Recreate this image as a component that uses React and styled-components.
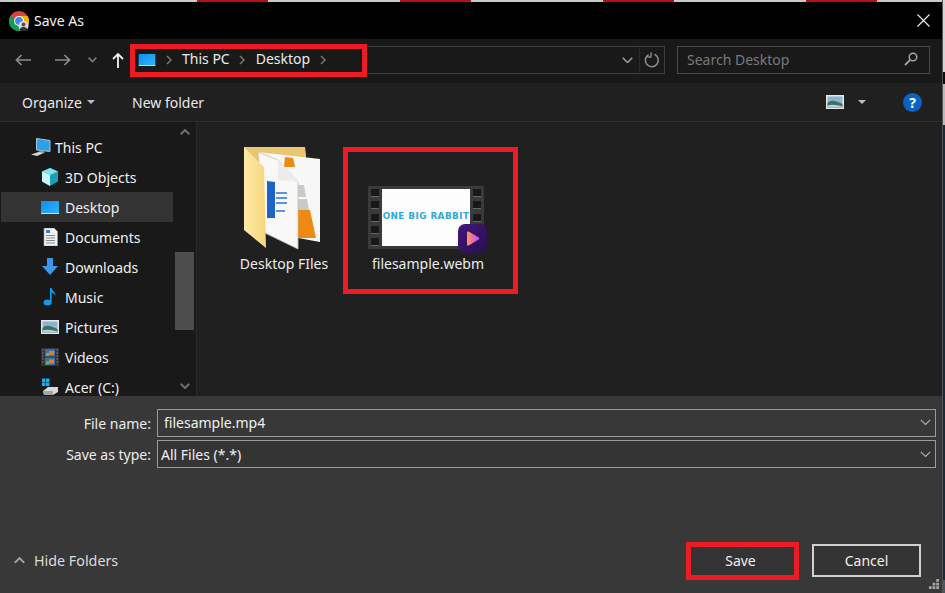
import React from "react";
import styled, { createGlobalStyle } from "styled-components";

const GlobalFix = createGlobalStyle`
  html, body { margin: 0; padding: 0; background: #000; }
  body { font-family: "Noto Sans", "Open Sans", sans-serif; font-size: 14px; color: #f2f2f2; }
`;

const Page = styled.div`
  position: relative;
  width: 945px;
  height: 593px;
  overflow: hidden;
  background: linear-gradient(to bottom, #d4d4d4 0 72px, #0c0c0c 72px 84px, #b9b9b9 84px 125px, #18293a 125px 580px, #4b5560 580px);
`;

const Dialog = styled.div`
  width: 943px;
  height: 593px;
  box-sizing: border-box;
  border-right: 1px solid #555;
  display: flex;
  flex-direction: column;
`;

const BackStrip = styled.div`
  height: 2px;
  flex: none;
  background: #c9c9c9;
  display: flex;
  gap: 132px;
  padding-left: 197px;
`;
const BackMark = styled.span`
  width: 71px;
  background: #b5120f;
`;

const TitleBar = styled.div`
  height: 37px;
  flex: none;
  background: #000;
  display: flex;
  align-items: center;
  padding: 0 12px 0 9px;
  gap: 5px;
`;
const TitleText = styled.div`
  flex: 1;
  font-size: 14px;
  color: #f4f4f4;
`;

const NavBar = styled.div`
  height: 44px;
  flex: none;
  background: #191919;
  box-sizing: border-box;
  display: flex;
  align-items: center;
  padding: 0 15px 2px;
`;
const NavButton = styled.div`
  width: ${(p) => p.$w}px;
  display: flex;
  align-items: center;
  flex: none;
`;
const AddressBar = styled.div`
  width: 532px;
  height: 28px;
  margin-left: 8px;
  box-sizing: border-box;
  border: 1px solid #3d3d3d;
  display: flex;
  align-items: center;
  padding-left: 4px;
  flex: none;
`;
const Crumb = styled.span`
  font-size: 14px;
  line-height: 18px;
  padding-bottom: 2px;
  color: #ececec;
`;
const CrumbArrow = styled.svg`
  width: 7px;
  height: 10px;
  margin: 0 9.5px;
  flex: none;
`;
const AddressEnd = styled.div`
  margin-left: auto;
  display: flex;
  align-items: center;
  height: 100%;
`;
const AddressCaret = styled.div`
  width: 24px;
  height: 100%;
  display: flex;
  align-items: center;
  justify-content: center;
  border-right: 1px solid #2a2a2a;
`;
const Refresh = styled.div`
  width: 24px;
  height: 100%;
  display: flex;
  align-items: center;
  justify-content: center;
`;
const SearchBox = styled.div`
  width: 253px;
  height: 28px;
  margin-left: 12px;
  box-sizing: border-box;
  border: 1px solid #4a4a4a;
  display: flex;
  align-items: center;
  justify-content: space-between;
  padding: 0 11px 2px 9px;
  flex: none;
  font-size: 14px;
  color: #7a7a7a;
`;

const ToolBar = styled.div`
  height: 38px;
  flex: none;
  background: #202020;
  border-bottom: 1px solid #2e2e2e;
  display: flex;
  align-items: center;
  padding: 0 20px 0 22px;
  font-size: 14px;
  color: #e8e8e8;
`;
const Organize = styled.div`
  display: flex;
  align-items: center;
  gap: 5px;
  width: 110px;
`;
const SmallCaret = styled.span`
  width: 0;
  height: 0;
  border-left: 4px solid transparent;
  border-right: 4px solid transparent;
  border-top: 4px solid #bdbdbd;
  flex: none;
`;
const ToolRight = styled.div`
  margin-left: auto;
  display: flex;
  align-items: center;
  gap: 14px;
`;
const ViewCaret = styled(SmallCaret)`
  margin-right: 23px;
`;
const HelpBadge = styled.div`
  width: 19px;
  height: 19px;
  border-radius: 50%;
  background: #0a63c4;
  color: #fff;
  font-weight: 700;
  font-size: 14px;
  line-height: 19px;
  text-align: center;
`;

const Main = styled.div`
  height: 274px;
  flex: none;
  display: flex;
  overflow: hidden;
`;
const Sidebar = styled.div`
  width: 197px;
  flex: none;
  background: #191919;
  border-right: 1px solid #2b2b2b;
  box-sizing: border-box;
  display: flex;
`;
const Tree = styled.div`
  width: 175px;
  padding: 10px 0 0 1px;
  box-sizing: border-box;
  flex: none;
`;
const TreeRow = styled.div`
  height: 30px;
  width: 172px;
  display: flex;
  align-items: center;
  gap: 6px;
  box-sizing: border-box;
  padding-left: ${(p) => (p.$root ? 30 : 40)}px;
  background: ${(p) => (p.$active ? "#333" : "transparent")};
  font-size: 14px;
  color: #f0f0f0;
`;
const TreeIcon = styled.span`
  width: 18px;
  height: 18px;
  flex: none;
  display: flex;
  align-items: center;
  justify-content: center;
`;
const ScrollTrack = styled.div`
  width: 19px;
  display: flex;
  flex-direction: column;
  align-items: center;
  padding-top: 7px;
`;
const ScrollThumb = styled.div`
  width: 19px;
  height: 78px;
  background: #4d4d4d;
  margin-top: 117px;
`;
const ScrollDown = styled.div`
  margin-top: 53px;
  display: flex;
`;

const Files = styled.div`
  flex: 1;
  background: #202020;
  display: flex;
  gap: 40px;
  padding-left: 35px;
`;
const Tile = styled.div`
  width: 104px;
  height: 274px;
  box-sizing: border-box;
  padding-bottom: 122px;
  display: flex;
  flex-direction: column;
  align-items: center;
  justify-content: flex-end;
  font-size: 14px;
  color: #ececec;
`;
const TileLabel = styled.div`
  margin-top: 2px;
  white-space: nowrap;
  line-height: 20px;
`;
const VideoThumb = styled.div`
  width: 116px;
  height: 63px;
  margin: 0 4px 3px 0;
  background: #3a3a3a;
  display: flex;
  justify-content: space-between;
  position: relative;
  flex: none;
`;
const FilmEdge = styled.div`
  width: 14px;
  display: flex;
  flex-direction: column;
  justify-content: space-between;
  align-items: center;
  padding: 3px 0;
  box-sizing: border-box;
`;
const FilmHole = styled.span`
  width: 8px;
  height: 7px;
  background: #181818;
  border-bottom: 1px solid #666;
`;
const Frame = styled.div`
  width: 88px;
  margin: 3px 0;
  background: #fdfdfd;
  color: #2fa9d8;
  font-family: "DejaVu Sans", sans-serif;
  font-size: 8.8px;
  font-weight: 700;
  letter-spacing: 0.45px;
  white-space: nowrap;
  display: flex;
  align-items: center;
  justify-content: center;
  padding-bottom: 3px;
  box-sizing: border-box;
`;
const AppBadge = styled.div`
  position: absolute;
  left: 90px;
  top: 38px;
  width: 29px;
  height: 29px;
  border-radius: 7px;
  background: linear-gradient(135deg, #43177a, #26104c);
  display: flex;
  align-items: center;
  justify-content: center;
`;

const Bottom = styled.div`
  flex: 1;
  background: #383838;
  display: flex;
  flex-direction: column;
  padding: 13px 6px 0 0;
  position: relative;
`;
const Form = styled.div`
  display: grid;
  grid-template-columns: 157px 1fr;
  row-gap: 3px;
  align-items: center;
`;
const FieldLabel = styled.div`
  text-align: right;
  padding-right: 6px;
  font-size: 14px;
  color: #ececec;
`;
const Field = styled.div`
  height: 28px;
  box-sizing: border-box;
  border: 1px solid #9a9a9a;
  background: ${(p) => (p.$select ? "#343434" : "#383838")};
  display: flex;
  align-items: center;
  justify-content: space-between;
  padding: 0 4px ${(p) => (p.$select ? 0 : 1)}px ${(p) => (p.$select ? 3 : 6)}px;
  font-size: 14px;
  color: #f0f0f0;
`;
const Footer = styled.div`
  margin-top: auto;
  margin-right: 15px;
  padding-bottom: 16px;
  display: flex;
  align-items: center;
`;
const HideFolders = styled.div`
  display: flex;
  align-items: center;
  gap: 9px;
  padding-left: 14px;
  margin-right: auto;
  font-size: 14.3px;
  color: #dcdcdc;
`;
const DialogButton = styled.div`
  width: 109px;
  height: 33px;
  box-sizing: border-box;
  border: 2px solid ${(p) => (p.$plain ? "transparent" : "#d0d0d0")};
  background: #333;
  margin-left: 17px;
  display: flex;
  align-items: center;
  justify-content: center;
  font-size: 14px;
  color: #f0f0f0;
`;
const Grip = styled.svg`
  position: absolute;
  right: 3px;
  bottom: 3px;
  width: 11px;
  height: 11px;
`;

// the red boxes are drawn over the dialog, they mark steps in the tutorial
const Highlight = styled.div`
  position: absolute;
  left: ${(p) => p.$x}px;
  top: ${(p) => p.$y}px;
  width: ${(p) => p.$w}px;
  height: ${(p) => p.$h}px;
  box-sizing: border-box;
  border: 5px solid #ed1c24;
  pointer-events: none;
`;

const ChromeIcon = () => (
  <svg width="20" height="20" viewBox="0 0 20 20">
    <circle cx="10" cy="10" r="10" fill="#db4437" />
    <path d="M10 10 1.3 5 A10 10 0 0 0 10 20 Z" fill="#0f9d58" />
    <path d="M10 10 10 20 A10 10 0 0 0 18.7 5 L10 5 Z" fill="#f4b400" />
    <circle cx="10" cy="10" r="5" fill="#fff" />
    <circle cx="10" cy="10" r="3.9" fill="#4285f4" />
    <circle cx="14.5" cy="15" r="5" fill="#ddd" />
    <circle cx="14.5" cy="13.5" r="2" fill="#6b4a3a" />
    <path d="M10.5 20a4 4 0 0 1 8 0z" fill="#333" />
  </svg>
);

const CloseIcon = () => (
  <svg width="13" height="13" viewBox="0 0 13 13">
    <path d="M.5.5l12 12M12.5.5l-12 12" stroke="#f2f2f2" strokeWidth="1.1" />
  </svg>
);

const ArrowLeft = ({ color, flip }) => (
  <svg width="17" height="12" viewBox="0 0 17 12" style={flip ? { transform: "scaleX(-1)" } : undefined}>
    <path d="M6.5 1 1.5 6l5 5M1.5 6H16" fill="none" stroke={color} strokeWidth="1.7" />
  </svg>
);

const ArrowUp = () => (
  <svg width="12" height="15" viewBox="0 0 12 15">
    <path d="M1 6l5-5 5 5M6 1v14" fill="none" stroke="#f4f4f4" strokeWidth="1.8" />
  </svg>
);

const Chevron = ({ size = 9, color = "#8a8a8a", width = 1.5, up }) => (
  <svg width={size} height={size * 0.6} viewBox="0 0 10 6" style={up ? { transform: "scaleY(-1)" } : undefined}>
    <path d="M.7.7 5 5 9.3.7" fill="none" stroke={color} strokeWidth={width} />
  </svg>
);

const Sep = () => (
  <CrumbArrow viewBox="0 0 7 10">
    <path d="M1 1l4 4-4 4" fill="none" stroke="#7d7d7d" strokeWidth="1.4" />
  </CrumbArrow>
);

const DesktopIcon = ({ w = 18, h = 13 }) => (
  <svg width={w} height={h} viewBox="0 0 18 13">
    <defs>
      <linearGradient id="dsk" x1="0" y1="0" x2="1" y2="1">
        <stop offset="0" stopColor="#0a8ff0" />
        <stop offset="1" stopColor="#35b4fb" />
      </linearGradient>
    </defs>
    <rect width="18" height="13" fill="url(#dsk)" />
    <rect y="12" width="18" height="1" fill="#bfe3fb" />
  </svg>
);

const PcIcon = () => (
  <svg width="20" height="18" viewBox="0 0 20 18" style={{ flex: "none", marginLeft: 2 }}>
    <path d="M5.500.5 19 2.500v11L5.500 12z" fill="#2f9fe8" stroke="#9fc6de" strokeWidth="1" />
    <path d="M0 16.500 9 13.500l5 1-8 3.500z" fill="#d5d5d5" />
    <path d="M9 12.500l5 1-1 1.500-5-1z" fill="#8c8c8c" />
  </svg>
);

const CubeIcon = () => (
  <svg width="18" height="18" viewBox="0 0 18 18">
    <path d="M9 0l8 3.500v10L9 18l-8-4.500v-10z" fill="#1d9fb5" />
    <path d="M9 0l8 3.500L9 7 1 3.500z" fill="#7fe3ee" />
    <path d="M1 3.500 9 7v11l-8-4.500z" fill="#c9f4f6" />
  </svg>
);

const DocIcon = () => (
  <svg width="15" height="18" viewBox="0 0 15 18">
    <path d="M1 0h10l3.500 3.500V18H1z" fill="#f3f3f3" stroke="#9a9a9a" strokeWidth=".6" />
    <rect x="3" y="2" width="4" height="3" fill="#2f7fd0" />
    <path d="M3 7.500h9M3 10h9M3 12.500h9M3 15h9" stroke="#7d8a96" strokeWidth="1" />
  </svg>
);

const DownloadIcon = () => (
  <svg width="18" height="18" viewBox="0 0 18 18">
    <path d="M6 0h6v8h5l-8 9-8-9h5z" fill="#3d97e8" />
  </svg>
);

const MusicIcon = () => (
  <svg width="14" height="18" viewBox="0 0 14 18">
    <ellipse cx="4.500" cy="14.500" rx="4" ry="3" fill="#139be8" />
    <path d="M7 14V0h1.600c.4 3 4.400 4 3.800 8-.6-2-2.400-3-3.800-3.200V14z" fill="#139be8" />
  </svg>
);

const PictureIcon = ({ w = 18, h = 14 }) => (
  <svg width={w} height={h} viewBox="0 0 18 14">
    <rect width="18" height="14" fill="#e9e9e9" />
    <rect x="1.500" y="1.500" width="15" height="11" fill="#8ab6cf" />
    <path d="M1.500 8C5 4 10 6 16.500 9v3.500h-15z" fill="#3f6f6a" />
    <path d="M1.500 10.500C6 9 11 10 16.500 11.500v1h-15z" fill="#bcd0d0" />
  </svg>
);

const FilmIcon = () => (
  <svg width="18" height="18" viewBox="0 0 18 18">
    <rect width="18" height="18" fill="#333" />
    <path d="M1 2h1.500M1 5h1.500M1 8h1.500M1 11h1.500M1 14h1.500M15.500 2H17M15.500 5H17M15.500 8H17M15.500 11H17M15.500 14H17" stroke="#888" strokeWidth="1.200" />
    <rect x="4" y="1" width="10" height="7.500" fill="#3b6fb0" />
    <rect x="4" y="9.500" width="10" height="7.500" fill="#3b6fb0" />
    <rect x="8" y="3" width="5" height="4" fill="#d9822b" />
    <rect x="8" y="11.500" width="5" height="4" fill="#d9822b" />
    <rect x="5" y="5" width="3" height="3" fill="#6fb04a" />
    <rect x="5" y="13.500" width="3" height="3" fill="#6fb04a" />
  </svg>
);

const DriveIcon = () => (
  <svg width="18" height="18" viewBox="0 0 18 18">
    <path d="M1 .5h3.400v3.400H1zM5 .5h3.400v3.400H5zM1 4.500h3.400v3.400H1zM5 4.500h3.400v3.400H5z" fill="#12b3ee" />
    <path d="M2 13l5-4h10v5l-5 3H3z" fill="#d8d8d8" />
    <path d="M2 13h10v4H3z" fill="#a5a5a5" />
  </svg>
);

const RefreshIcon = () => (
  <svg width="16" height="16" viewBox="0 0 16 16">
    <path d="M10.500 2.300A6.500 6.500 0 1 1 4.600 2.600" fill="none" stroke="#8c8c8c" strokeWidth="1.600" />
    <path d="M7 0v5H2.200" fill="none" stroke="#8c8c8c" strokeWidth="1.400" transform="rotate(8 5 3)" />
  </svg>
);

const SearchIcon = () => (
  <svg width="14" height="14" viewBox="0 0 14 14">
    <circle cx="9" cy="5" r="3.800" fill="none" stroke="#a5a5a5" strokeWidth="1.500" />
    <path d="M6.200 7.800 1 13" stroke="#a5a5a5" strokeWidth="1.800" />
  </svg>
);

const FolderIcon = () => (
  <svg width="80" height="105" viewBox="0 0 80 105">
    <defs>
      <linearGradient id="fld" x1="0" y1="0" x2="1" y2="0">
        <stop offset="0" stopColor="#fdeaa6" />
        <stop offset="1" stopColor="#f7d67c" />
      </linearGradient>
    </defs>
    <path d="M0 0h61l1 8v30H0z" fill="#e9c670" />
    <path d="M14 5l62 7v83l-22-4z" fill="#f7f7f7" />
    <path d="M41 10l8 1 2 9-11 0z" fill="#ee8a12" />
    <path d="M54 38h6l2 12h-8zM54 52h9l2 11H54z" fill="#c9c9c9" />
    <path d="M54 63h12l6 28H54z" fill="#ee8a12" />
    <path d="M14 5l20 8 20 22v67L21 86z" fill="#f8f8f8" stroke="#c9c0a8" strokeWidth=".8" />
    <path d="M34 13v20l20 2z" fill="#ececec" />
    <path d="M23 34l8 1v36h-8z" fill="#1e63c5" />
    <path d="M32 46h11M32 51h11M32 56h11M32 64h9" stroke="#2b74c9" strokeWidth="1.500" />
    <path d="M0 0l20 20 2 81L0 83z" fill="url(#fld)" />
  </svg>
);

const treeItems = [
  { label: "3D Objects", icon: <CubeIcon /> },
  { label: "Desktop", icon: <DesktopIcon />, active: true },
  { label: "Documents", icon: <DocIcon /> },
  { label: "Downloads", icon: <DownloadIcon /> },
  { label: "Music", icon: <MusicIcon /> },
  { label: "Pictures", icon: <PictureIcon /> },
  { label: "Videos", icon: <FilmIcon /> },
  { label: "Acer (C:)", icon: <DriveIcon /> },
];

const filmHoles = [0, 1, 2, 3, 4];

export default function App() {
  return (
    <Page>
      <GlobalFix />
      <Dialog>
        <BackStrip>
          <BackMark />
          <BackMark />
          <BackMark />
          <BackMark />
        </BackStrip>

        <TitleBar>
          <ChromeIcon />
          <TitleText>Save As</TitleText>
          <CloseIcon />
        </TitleBar>

        <NavBar>
          <NavButton $w={39}><ArrowLeft color="#8c8c8c" /></NavButton>
          <NavButton $w={34}><ArrowLeft color="#8c8c8c" flip /></NavButton>
          <NavButton $w={24}><Chevron size={9} color="#7a7a7a" width={1.8} /></NavButton>
          <NavButton $w={13}><ArrowUp /></NavButton>
          <AddressBar>
            <DesktopIcon w={18} h={12} />
            <Sep />
            <Crumb>This PC</Crumb>
            <Sep />
            <Crumb>Desktop</Crumb>
            <Sep />
            <AddressEnd>
              <AddressCaret><Chevron size={11} color="#999" width={1.5} /></AddressCaret>
              <Refresh><RefreshIcon /></Refresh>
            </AddressEnd>
          </AddressBar>
          <SearchBox>
            <span>Search Desktop</span>
            <SearchIcon />
          </SearchBox>
        </NavBar>

        <ToolBar>
          <Organize>Organize <SmallCaret /></Organize>
          <span>New folder</span>
          <ToolRight>
            <PictureIcon w={18} h={14} />
            <ViewCaret />
            <HelpBadge>?</HelpBadge>
          </ToolRight>
        </ToolBar>

        <Main>
          <Sidebar>
            <Tree>
              <TreeRow $root>
                <TreeIcon><PcIcon /></TreeIcon>
                This PC
              </TreeRow>
              {treeItems.map((item) => (
                <TreeRow key={item.label} $active={item.active}>
                  <TreeIcon>{item.icon}</TreeIcon>
                  {item.label}
                </TreeRow>
              ))}
            </Tree>
            <ScrollTrack>
              <Chevron size={10} color="#6e6e6e" width={2} up />
              <ScrollThumb />
              <ScrollDown><Chevron size={10} color="#6e6e6e" width={2} /></ScrollDown>
            </ScrollTrack>
          </Sidebar>
          <Files>
            <Tile>
              <FolderIcon />
              <TileLabel>Desktop FIles</TileLabel>
            </Tile>
            <Tile>
              <VideoThumb>
                <FilmEdge>{filmHoles.map((h) => <FilmHole key={h} />)}</FilmEdge>
                <Frame>ONE BIG RABBIT</Frame>
                <FilmEdge>{filmHoles.map((h) => <FilmHole key={h} />)}</FilmEdge>
                <AppBadge>
                  <svg width="15" height="15" viewBox="0 0 15 15">
                    <defs>
                      <linearGradient id="ply" x1="0" y1="0" x2="1" y2="0">
                        <stop offset="0" stopColor="#ff9a4a" />
                        <stop offset="0.4" stopColor="#f06fa8" />
                        <stop offset="1" stopColor="#c44dff" />
                      </linearGradient>
                    </defs>
                    <path d="M2 1.500c0-1 .8-1.400 1.700-.9l10 6c.8.500.8 1.300 0 1.800l-10 6c-.9.500-1.700.1-1.700-.9z" fill="url(#ply)" />
                  </svg>
                </AppBadge>
              </VideoThumb>
              <TileLabel>filesample.webm</TileLabel>
            </Tile>
          </Files>
        </Main>

        <Bottom>
          <Form>
            <FieldLabel>File name:</FieldLabel>
            <Field>filesample.mp4<Chevron size={11} color="#b0b0b0" width={1} /></Field>
            <FieldLabel>Save as type:</FieldLabel>
            <Field $select>All Files (*.*)<Chevron size={11} color="#b0b0b0" width={1} /></Field>
          </Form>
          <Footer>
            <HideFolders><Chevron size={11} color="#a5a5a5" width={1.8} up />Hide Folders</HideFolders>
            <DialogButton $plain>Save</DialogButton>
            <DialogButton>Cancel</DialogButton>
          </Footer>
          <Grip viewBox="0 0 12 12">
            <path d="M9 0h3v3H9zM5 4h3v3H5zM9 4h3v3H9zM1 8h3v3H1zM5 8h3v3H5zM9 8h3v3H9z" fill="#a5a5a5" />
          </Grip>
        </Bottom>
      </Dialog>

      <Highlight $x={130} $y={44} $w={237} $h={33} />
      <Highlight $x={343} $y={147} $w={175} $h={147} />
      <Highlight $x={686} $y={542} $w={113} $h={38} />
    </Page>
  );
}
